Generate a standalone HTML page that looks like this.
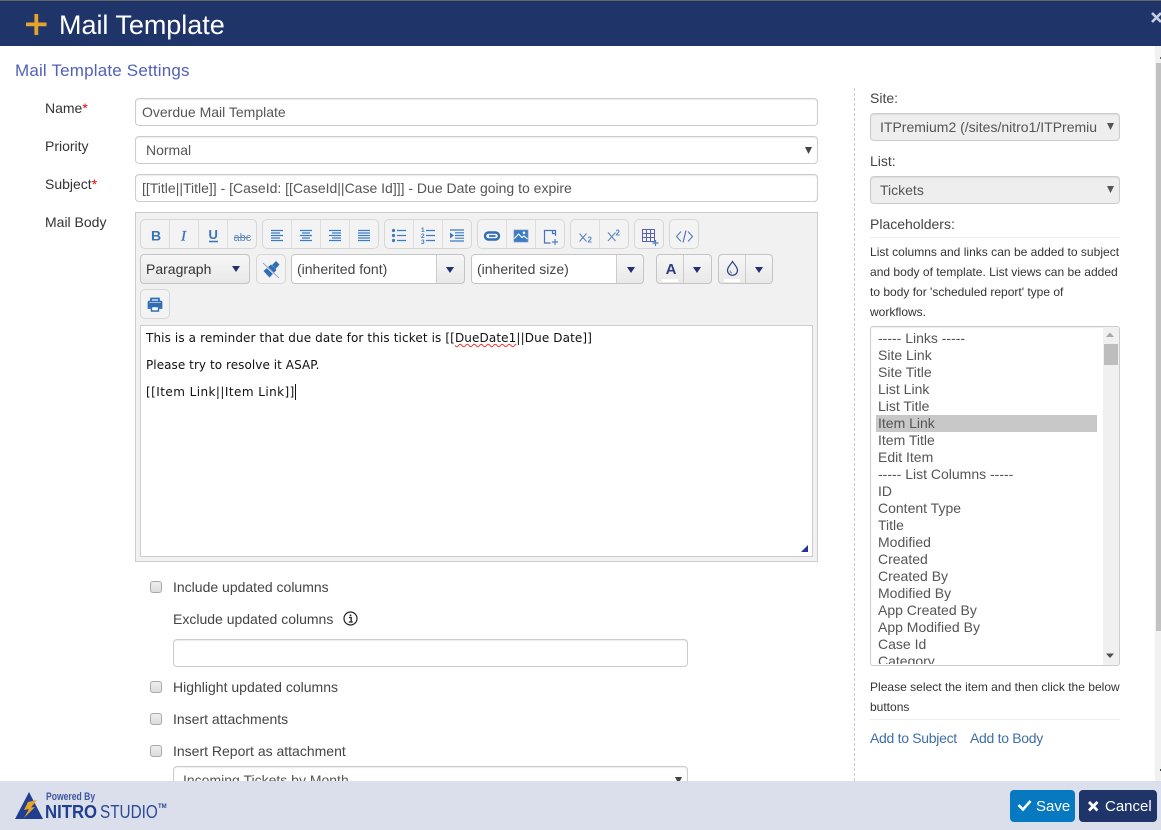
<!DOCTYPE html>
<html lang="en"><head><meta charset="utf-8"><title>Mail Template</title>
<style>
html,body{margin:0;padding:0;width:1161px;height:830px;overflow:hidden;background:#fff;font-family:"Liberation Sans",sans-serif;color:#333}
.a{position:absolute;white-space:nowrap}
.t{position:absolute;white-space:nowrap;font-size:14px;line-height:20px}
.f{position:absolute;box-sizing:border-box;border:1px solid #ccc;border-radius:4px;background:#fff;font-size:14px;color:#555;white-space:nowrap;box-shadow:inset 0 1px 1px rgba(0,0,0,.075)}
.g{position:absolute;box-sizing:border-box;top:219px;height:30px;border:1px solid #d6d6d6;border-radius:5px;background:#f3f3f3;display:flex}
.g i{display:block;position:relative;width:29px;height:28px;border-left:1px solid #ddd;box-sizing:border-box;font-style:normal}
.g i:first-child{border-left:0;width:28px}
.g svg{position:absolute;left:0;top:0}
.d{position:absolute;box-sizing:border-box;border:1px solid #c4c4c4;border-radius:4px;background:linear-gradient(#f6f6f6,#e9e9e9);height:30px}
.tri{position:absolute;width:0;height:0;border-left:4px solid transparent;border-right:4px solid transparent;border-top:6px solid #22306f}
.cb{position:absolute;left:150px;width:12px;height:12px;box-sizing:border-box;border:1px solid #a8a8a8;border-radius:3px;background:linear-gradient(#eee,#dcdcdc)}
.li{position:absolute;left:878px;font-size:14px;line-height:17px;color:#555;white-space:nowrap}
.e{position:absolute;left:146px;font-family:"DejaVu Sans",sans-serif;font-size:12px;line-height:16px;color:#111;white-space:nowrap}
.help{position:absolute;left:870px;font-size:12px;line-height:20px;color:#333;white-space:nowrap}
svg{display:block}
</style></head><body>

<div class="a" style="left:0;top:0;width:1161px;height:1px;background:#666"></div>
<div class="a" style="left:0;top:1px;width:1161px;height:45px;background:#1f3569"></div>
<svg class="a" style="left:26px;top:14px" width="21" height="21"><path d="M8.400 0h3.800v8.500H20.500v3.800H12.200V21H8.400V12.300H0V8.500h8.400z" fill="#e5a32c"/></svg>
<div class="a" style="left:59px;top:7px;font-size:27px;line-height:36px;color:#fff;letter-spacing:-.03px">Mail Template</div>
<svg class="a" style="left:1150px;top:11px" width="11" height="14"><path d="M2 2l9 9M11 2l-9 9" stroke="#c5cede" stroke-width="2.600" fill="none"/></svg>

<div class="a" style="left:15px;top:60px;font-size:17px;line-height:21px;color:#5161b8;letter-spacing:.18px">Mail Template Settings</div>

<div class="t" style="left:45px;top:98px">Name<span style="color:#e00">*</span></div>
<div class="t" style="left:45px;top:136px">Priority</div>
<div class="t" style="left:45px;top:174px">Subject<span style="color:#e00">*</span></div>
<div class="t" style="left:45px;top:212px">Mail Body</div>

<div class="f" style="left:135px;top:98px;width:683px;height:28px;padding:0 6px;line-height:26px">Overdue Mail Template</div>
<div class="f" style="left:135px;top:136px;width:683px;height:28px;padding:0 10px;line-height:27px">Normal
  <svg class="a" style="right:5px;top:10px" width="7" height="7"><path d="M0 0h7L3.500 7z" fill="#444"/></svg></div>
<div class="f" style="left:135px;top:174px;width:683px;height:28px;padding:0 6px;line-height:26px">[[Title||Title]] - [CaseId: [[CaseId||Case Id]]] - Due Date going to expire</div>

<div class="a" style="left:135px;top:212px;width:683px;height:350px;box-sizing:border-box;border:1px solid #ccc;background:#f1f1f1"></div>

<!-- toolbar row 1 -->
<div class="g" style="left:140px;width:117px">
 <i><svg width="28" height="28"><text x="10" y="20.500" font-family="Liberation Sans" font-weight="700" font-size="14" fill="#3a74b8">B</text></svg></i>
 <i><svg width="28" height="28"><text x="11" y="20.500" font-family="Liberation Serif" font-style="italic" font-size="15" fill="#3a74b8" stroke="#3a74b8" stroke-width=".3">I</text></svg></i>
 <i><svg width="28" height="28"><text x="9.500" y="19" font-family="Liberation Sans" font-weight="700" font-size="13" fill="#3a74b8">U</text><path d="M10 21.500h9" stroke="#3a74b8" stroke-width="1.500"/></svg></i>
 <i><svg width="28" height="28"><text x="5.500" y="21" font-family="Liberation Sans" font-size="11" fill="#5b86c0">abc</text><path d="M6 17.500h16" stroke="#5b86c0"/></svg></i>
</div>
<div class="g" style="left:262px;width:117px">
 <i><svg width="28" height="28"><path d="M8 10.500h12M8 13h9M8 15.500h12M8 18h9M8 20.500h12" stroke="#3a7cc4" stroke-width="1.200"/></svg></i>
 <i><svg width="28" height="28"><path d="M8 10.500h12M10 13h8M8 15.500h12M10 18h8M8 20.500h12" stroke="#3a7cc4" stroke-width="1.200"/></svg></i>
 <i><svg width="28" height="28"><path d="M8 10.500h12M11 13h9M8 15.500h12M11 18h9M8 20.500h12" stroke="#3a7cc4" stroke-width="1.200"/></svg></i>
 <i><svg width="28" height="28"><path d="M8 10.500h12M8 13h12M8 15.500h12M8 18h12M8 20.500h12" stroke="#3a7cc4" stroke-width="1.200"/></svg></i>
</div>
<div class="g" style="left:384px;width:88px">
 <i><svg width="28" height="28"><path d="M12 10.500h9M12 15.500h9M12 20.500h9" stroke="#3a7cc4" stroke-width="1.200"/><circle cx="8.500" cy="10.500" r="1.600" fill="#3a7cc4"/><circle cx="8.500" cy="15.500" r="1.600" fill="#3a7cc4"/><circle cx="8.500" cy="20.500" r="1.600" fill="#3a7cc4"/></svg></i>
 <i><svg width="28" height="28"><path d="M12 10.500h9M12 15.500h9M12 20.500h9" stroke="#3a7cc4" stroke-width="1.200"/><text x="7" y="12" font-family="Liberation Sans" font-size="6.500" font-weight="700" fill="#3a7cc4">1</text><text x="7" y="18" font-family="Liberation Sans" font-size="6.500" font-weight="700" fill="#3a7cc4">2</text><text x="7" y="24" font-family="Liberation Sans" font-size="6.500" font-weight="700" fill="#3a7cc4">3</text></svg></i>
 <i><svg width="28" height="28"><path d="M7 10h14M12 12.800h9M12 15.500h9M12 18.200h9M7 21h14" stroke="#3a7cc4" stroke-width="1.200"/><path d="M7 12.500l4 3-4 3z" fill="#3a7cc4"/></svg></i>
</div>
<div class="g" style="left:477px;width:88px">
 <i><svg width="28" height="28"><rect x="7" y="12.500" width="14" height="7" rx="3.500" fill="none" stroke="#2f6db5" stroke-width="2.400"/><path d="M11 16h6.500" stroke="#2f6db5" stroke-width="1.800"/></svg></i>
 <i><svg width="28" height="28"><rect x="7" y="10" width="14" height="12" fill="#3a7cc4" stroke="#7d92c8" stroke-width=".7"/><path d="M7.500 18.500l4-4.500 3.500 3.500 2-1.500 3.500 3" fill="none" stroke="#fff" stroke-width="1.100"/><circle cx="17" cy="12.800" r="1.300" fill="#fff"/></svg></i>
 <i><svg width="28" height="28"><path d="M19.500 16V10.500H8.500V23h6M16.500 10.500V13.500h3" fill="none" stroke="#4a72bd" stroke-width="1.200"/><path d="M16 22h6M19 19v6" stroke="#4a80c0" stroke-width="1.200"/></svg></i>
</div>
<div class="g" style="left:570px;width:59px">
 <i><svg width="28" height="28"><path d="M8.500 13.500l7 8M15.500 13.500l-7 8" stroke="#5b86c6" stroke-width="1.100"/><text x="16.500" y="22.500" font-family="Liberation Sans" font-size="8" font-weight="700" fill="#5b86c6">2</text></svg></i>
 <i><svg width="28" height="28"><path d="M8 12.500l7.500 8.500M15.500 12.500L8 21" stroke="#5b86c6" stroke-width="1.100"/><text x="15.500" y="15.500" font-family="Liberation Sans" font-size="8" font-weight="700" fill="#5b86c6">2</text></svg></i>
</div>
<div class="g" style="left:634px;width:30px">
 <i style="width:28px"><svg width="28" height="28"><path d="M7.500 9.500h12v12h-12zM11.500 9.500v12M15.500 9.500v12M7.500 13.500h12M7.500 17.500h12" fill="none" stroke="#5a62b5"/><path d="M17.500 23h6M20.500 20v6" stroke="#4a80c0" stroke-width="1.200"/></svg></i>
</div>
<div class="g" style="left:669px;width:30px">
 <i style="width:28px"><svg width="28" height="28"><path d="M11 11.500l-4.500 5 4.500 5M18 11.500l4.500 5-4.500 5" fill="none" stroke="#4a80c6" stroke-width="1.100"/><path d="M16 10.500l-3 12" stroke="#5a62b5" stroke-width="1.100"/></svg></i>
</div>

<!-- toolbar row 2 -->
<div class="d" style="left:140px;top:254px;width:110px"><div class="a" style="left:5px;top:5px;font-size:14px;line-height:18px;color:#333">Paragraph</div><div class="tri" style="left:91px;top:11px"></div></div>
<div class="g" style="left:256px;top:254px;width:30px"><i style="width:28px"><svg width="28" height="28"><path d="M6.500 16l7.500-6.500 5.500 5.500-7 7.500z" fill="#2f6db5"/><path d="M15 10l4-4 3.500 3.500-4 4.500z" fill="#2f6db5"/><path d="M6 8.500l15 14" stroke="#f3f3f3" stroke-width="1.800"/><path d="M6 8l16 15" stroke="#6f8ec4" stroke-width=".8"/></svg></i></div>
<div class="d" style="left:291px;top:254px;width:174px"><div class="a" style="left:0;top:0;width:144px;height:28px;background:#fff;border-right:1px solid #ccc;border-radius:3px 0 0 3px"></div><div class="a" style="left:5px;top:5px;font-size:14px;line-height:18px;color:#444">(inherited font)</div><div class="tri" style="left:154px;top:12px"></div></div>
<div class="d" style="left:471px;top:254px;width:173px"><div class="a" style="left:0;top:0;width:144px;height:28px;background:#fff;border-right:1px solid #ccc;border-radius:3px 0 0 3px"></div><div class="a" style="left:5px;top:5px;font-size:14px;line-height:18px;color:#444">(inherited size)</div><div class="tri" style="left:155px;top:12px"></div></div>
<div class="d" style="left:656px;top:254px;width:56px"><div class="a" style="left:26px;top:0;width:1px;height:28px;background:#ccc"></div><div class="a" style="left:6px;top:5px;width:16px;font-size:15px;font-weight:700;line-height:20px;text-align:center;color:#2d3f80">A</div><div class="a" style="left:5px;top:24px;width:16px;height:3px;background:#fff"></div><div class="tri" style="left:36px;top:12px"></div></div>
<div class="d" style="left:718px;top:254px;width:55px"><div class="a" style="left:26px;top:0;width:1px;height:28px;background:#ccc"></div><svg class="a" style="left:6px;top:3px" width="16" height="19"><path d="M7.500 3.500C5.500 7 2.500 9 2.500 12.300a5 5 0 0 0 10 0C12.500 9 9.500 7 7.500 3.500z" fill="none" stroke="#2d3f80" stroke-width="1.200"/><path d="M5 12.500c.2 1.500 1 2.300 2 2.500" fill="none" stroke="#5a86c0"/></svg><div class="a" style="left:5px;top:24px;width:16px;height:3px;background:#fff"></div><div class="tri" style="left:36px;top:12px"></div></div>

<!-- toolbar row 3 -->
<div class="g" style="left:140px;top:289px;width:30px"><i style="width:28px"><svg width="28" height="28"><path d="M10 12V8.500h8V12M10 18H7.500v-5.500a1 1 0 0 1 1-1h11a1 1 0 0 1 1 1V18H18" fill="none" stroke="#2f6db5" stroke-width="1.700"/><path d="M8 13h12v4H8z" fill="#2f6db5"/><path d="M10.500 16.500h7v4.500h-7z" fill="#fff" stroke="#2f6db5" stroke-width="1.400"/></svg></i></div>

<!-- editor -->
<div class="a" style="left:140px;top:325px;width:673px;height:232px;box-sizing:border-box;border:1px solid #ccc;background:#fff"></div>
<div class="e" style="top:330px;letter-spacing:.116px">This is a reminder that due date for this ticket is [[<span style="text-decoration:underline wavy #e33 1px;text-underline-offset:1px">DueDate1</span>||Due Date]]</div>
<div class="e" style="top:357px;letter-spacing:.06px">Please try to resolve it ASAP.</div>
<div class="e" style="top:384px;letter-spacing:.44px">[[Item Link||Item Link]]</div>
<div class="a" style="left:295px;top:384px;width:1px;height:16px;background:#111"></div>
<svg class="a" style="left:801px;top:545px" width="7" height="7"><path d="M7 0v7H0z" fill="#2233a0"/></svg>

<!-- checks -->
<div class="cb" style="top:581px"></div>
<div class="t" style="left:173px;top:577px;color:#444">Include updated columns</div>
<div class="t" style="left:173px;top:609px;color:#444">Exclude updated columns</div>
<svg class="a" style="left:343px;top:611px" width="15" height="15"><circle cx="7.500" cy="7.500" r="6.500" fill="none" stroke="#222" stroke-width="1.200"/><path d="M6 6.500h2.200V11M5.800 11h4" fill="none" stroke="#222" stroke-width="1.300"/><path d="M6.700 3.500h1.600v1.600H6.700z" fill="#222"/></svg>
<div class="f" style="left:173px;top:639px;width:515px;height:28px"></div>
<div class="cb" style="top:681px"></div>
<div class="t" style="left:173px;top:677px;color:#444">Highlight updated columns</div>
<div class="cb" style="top:713px"></div>
<div class="t" style="left:173px;top:709px;color:#444">Insert attachments</div>
<div class="cb" style="top:745px"></div>
<div class="t" style="left:173px;top:741px;color:#444">Insert Report as attachment</div>
<div class="f" style="left:173px;top:766px;width:515px;height:28px;padding:0 9px;line-height:26px;color:#555">Incoming Tickets by Month
  <svg class="a" style="right:5px;top:10px" width="7" height="7"><path d="M0 0h7L3.500 7z" fill="#444"/></svg></div>

<!-- right column -->
<div class="a" style="left:854px;top:88px;height:693px;border-left:1px dashed #ccc"></div>
<div class="t" style="left:870px;top:88px;color:#444">Site:</div>
<div class="f" style="left:870px;top:113px;width:250px;height:28px;background:#eee;padding:0 9px;line-height:26px">ITPremium2 (/sites/nitro1/ITPremiu
  <svg class="a" style="right:5px;top:9px" width="7" height="7"><path d="M0 0h7L3.500 7z" fill="#555"/></svg></div>
<div class="t" style="left:870px;top:151px;color:#444">List:</div>
<div class="f" style="left:870px;top:176px;width:250px;height:28px;background:#eee;padding:0 9px;line-height:26px">Tickets
  <svg class="a" style="right:5px;top:9px" width="7" height="7"><path d="M0 0h7L3.500 7z" fill="#555"/></svg></div>
<div class="t" style="left:870px;top:214px;color:#444">Placeholders:</div>
<div class="a" style="left:870px;top:237px;width:250px;height:1px;background:#eee"></div>
<div class="help" style="top:242px;letter-spacing:.02px">List columns and links can be added to subject</div>
<div class="help" style="top:262px;letter-spacing:.02px">and body of template. List views can be added</div>
<div class="help" style="top:282px">to body for 'scheduled report' type of</div>
<div class="help" style="top:302px">workflows.</div>

<div class="a" style="left:870px;top:326px;width:250px;height:340px;box-sizing:border-box;border:1px solid #ccc;border-radius:3px;background:#fff;overflow:hidden;box-shadow:inset 0 1px 1px rgba(0,0,0,.075)">
  <div class="a" style="left:232px;top:0;width:17px;height:338px;background:#f0f0f0"></div>
  <div class="a" style="left:233px;top:17px;width:14px;height:21px;background:#bdbdbd"></div>
  <svg class="a" style="left:235px;top:5px" width="9" height="6"><path d="M0 5h8L4 .5z" fill="#a8a8a8"/></svg>
  <svg class="a" style="left:235px;top:326px" width="9" height="6"><path d="M0 .5h8L4 5z" fill="#505050"/></svg>
  <div class="a" style="left:5px;top:88px;width:221px;height:17px;background:#c8c8c8"></div>
</div>
<div style="position:absolute;left:0;top:0;width:1161px;height:664px;overflow:hidden;pointer-events:none">
<div class="li" style="top:330px">----- Links -----</div>
<div class="li" style="top:347px">Site Link</div>
<div class="li" style="top:364px">Site Title</div>
<div class="li" style="top:381px">List Link</div>
<div class="li" style="top:398px">List Title</div>
<div class="li" style="top:415px">Item Link</div>
<div class="li" style="top:432px">Item Title</div>
<div class="li" style="top:449px">Edit Item</div>
<div class="li" style="top:466px">----- List Columns -----</div>
<div class="li" style="top:483px">ID</div>
<div class="li" style="top:500px">Content Type</div>
<div class="li" style="top:517px">Title</div>
<div class="li" style="top:534px">Modified</div>
<div class="li" style="top:551px">Created</div>
<div class="li" style="top:568px">Created By</div>
<div class="li" style="top:585px">Modified By</div>
<div class="li" style="top:602px">App Created By</div>
<div class="li" style="top:619px">App Modified By</div>
<div class="li" style="top:636px">Case Id</div>
<div class="li" style="top:653px">Category</div>
</div>
<div class="help" style="top:677px;letter-spacing:.02px">Please select the item and then click the below</div>
<div class="help" style="top:697px">buttons</div>
<div class="a" style="left:870px;top:719px;width:250px;height:1px;background:#eee"></div>
<div class="t" style="left:870px;top:728px;color:#3f6ea8;letter-spacing:-.3px">Add to Subject</div>
<div class="t" style="left:970px;top:728px;color:#3f6ea8;letter-spacing:-.3px">Add to Body</div>

<!-- page scrollbar -->
<div class="a" style="left:1155px;top:46px;width:6px;height:735px;background:#f1f1f1"></div>
<div class="a" style="left:1156px;top:63px;width:5px;height:568px;background:#c1c1c1"></div>
<div class="a" style="left:1160px;top:57px;width:1px;height:2px;background:#666"></div>
<div class="a" style="left:1160px;top:769px;width:1px;height:2px;background:#444"></div>

<!-- footer -->
<div class="a" style="left:0;top:781px;width:1161px;height:49px;background:#dadfeb"></div>
<svg class="a" style="left:14px;top:791px" width="31" height="29"><path d="M15 1L29 28H1z" fill="#20408f"/><path d="M23 9l-9 2-4 8 5-1-5 9 11-11-4 .5z" fill="#e5a32c"/></svg>
<div class="a" style="left:46px;top:792px;font-size:11px;font-weight:700;line-height:11px;color:#3e57a0;transform:scaleX(.78);transform-origin:0 0">Powered By</div>
<div class="a" style="left:45px;top:802px;font-size:18px;font-weight:700;line-height:20px;color:#20408f;transform:scaleX(.93);transform-origin:0 0">NITRO</div>
<div class="a" style="left:100px;top:802px;font-size:18px;line-height:20px;color:#2c4a96;transform:scaleX(.85);transform-origin:0 0">STUDIO</div>
<div class="a" style="left:158px;top:804px;font-size:6px;font-weight:700;line-height:7px;color:#2c4a96">TM</div>

<div class="a" style="left:1010px;top:790px;width:65px;height:32px;background:#0779c1;border-radius:4px"></div>
<svg class="a" style="left:1017px;top:798px" width="15" height="14"><path d="M1.500 7l4.500 4.500L13.500 3" fill="none" stroke="#fff" stroke-width="2.600"/></svg>
<div class="a" style="left:1036px;top:797px;font-size:15px;line-height:20px;color:#fff">Save</div>
<div class="a" style="left:1079px;top:790px;width:78px;height:32px;background:#1f3569;border-radius:4px"></div>
<svg class="a" style="left:1087px;top:800px" width="13" height="13"><path d="M2 2l8.500 8.500M10.500 2L2 10.500" fill="none" stroke="#fff" stroke-width="2.800"/></svg>
<div class="a" style="left:1105px;top:797px;font-size:15px;line-height:20px;color:#fff">Cancel</div>
</body></html>
